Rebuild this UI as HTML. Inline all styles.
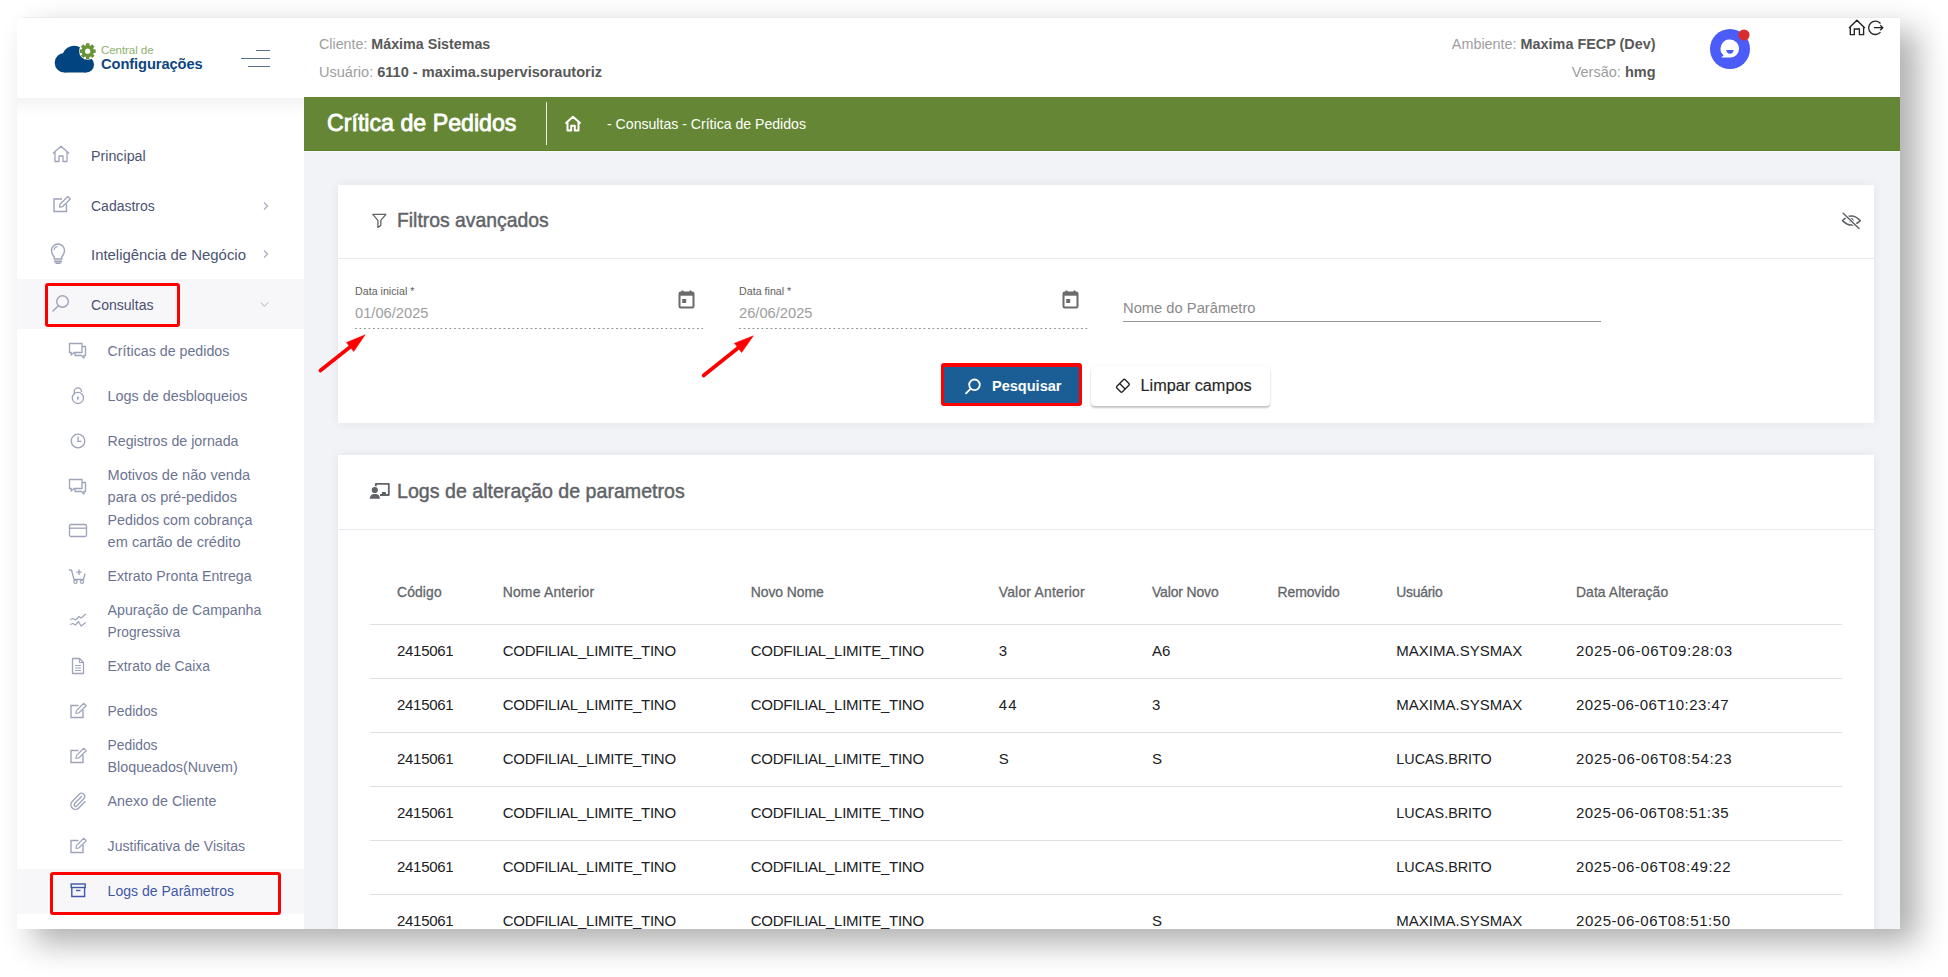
<!DOCTYPE html>
<html><head><meta charset="utf-8">
<style>
*{box-sizing:border-box;margin:0;padding:0}
html,body{width:1948px;height:977px;overflow:hidden;background:#fff;font-family:"Liberation Sans",sans-serif}
#frame{position:absolute;left:17px;top:17px;width:1883px;height:912px;background:#fff;border-top-left-radius:8px;overflow:hidden;box-shadow:17px 14px 32px rgba(0,0,0,.32)}
#pg{position:absolute;left:-17px;top:-17px;width:1948px;height:977px}
.a{position:absolute}
.t{position:absolute;white-space:nowrap;line-height:1}
b{font-weight:700}
</style></head><body>
<div id="frame"><div id="pg">
<div class="a" style="left:304px;top:151px;width:1596px;height:778px;background:#f2f3f7"></div>
<div class="a" style="left:17px;top:98px;width:287px;height:21px;background:linear-gradient(#f3f3f3,#fafafa 45%,#fff)"></div>
<div class="a" style="left:304px;top:97px;width:1596px;height:54px;background:#658735;border-bottom:1px solid #5b8228"></div>
<div class="a" style="left:304px;top:151px;width:1596px;height:1px;background:#f9f8fc"></div>
<div class="a" style="left:17px;top:279px;width:287px;height:50px;background:#f7f7fa"></div>
<div class="a" style="left:17px;top:869px;width:287px;height:44.5px;background:#f7f7fa"></div>
<div class="a" style="left:17px;top:17px;width:1883px;height:1px;background:#ebebeb"></div>
<svg class="a" style="left:50px;top:40px;" width="60" height="40" viewBox="0 0 60 40">
<g fill="#00457f"><circle cx="24.2" cy="17.8" r="12"/><circle cx="14.5" cy="22.7" r="9.8"/><circle cx="36" cy="24.5" r="8"/><rect x="14.5" y="18" width="21.5" height="14.5"/></g>
<g transform="translate(37.7,11.2)"><circle r="8.6" fill="#fff"/><circle r="6.2" fill="#6a9339"/>
<g fill="#6a9339">
<rect x="-1.7" y="-8" width="3.4" height="3.2"/><rect x="-1.7" y="4.8" width="3.4" height="3.2"/>
<rect x="-8" y="-1.7" width="3.2" height="3.4"/><rect x="4.8" y="-1.7" width="3.2" height="3.4"/>
<rect x="-1.7" y="-8" width="3.4" height="3.2" transform="rotate(45)"/><rect x="-1.7" y="4.8" width="3.4" height="3.2" transform="rotate(45)"/>
<rect x="-8" y="-1.7" width="3.2" height="3.4" transform="rotate(45)"/><rect x="4.8" y="-1.7" width="3.2" height="3.4" transform="rotate(45)"/>
</g><circle r="2.6" fill="#fff"/></g>
</svg>
<div class="t" style="left:101.00px;top:44px;font-size:11.6px;color:#8fb36f;font-weight:400;letter-spacing:-0.1px">Central de</div>
<div class="t" style="left:101.00px;top:57px;font-size:14.7px;color:#0d4583;font-weight:700;letter-spacing:-0.1px">Configurações</div>
<div class="a" style="left:256px;top:49.5px;width:14px;height:1.5px;background:#5b7392"></div>
<div class="a" style="left:241px;top:57.7px;width:29px;height:1.5px;background:#5b7392"></div>
<div class="a" style="left:248px;top:65.8px;width:22px;height:1.5px;background:#5b7392"></div>
<div class="t" style="left:319.00px;top:37px;font-size:14.27px;color:#9e9e9e;font-weight:400;">Cliente: <b style="color:#585858">Máxima Sistemas</b></div>
<div class="t" style="left:319.00px;top:65px;font-size:14.55px;color:#9e9e9e;font-weight:400;">Usuário: <b style="color:#585858">6110 - maxima.supervisorautoriz</b></div>
<div class="t" style="right:292.50px;top:37px;font-size:14.4px;color:#9e9e9e;font-weight:400;">Ambiente: <b style="color:#585858">Maxima FECP (Dev)</b></div>
<div class="t" style="right:292.50px;top:65px;font-size:14.5px;color:#9e9e9e;font-weight:400;">Versão: <b style="color:#585858">hmg</b></div>
<svg class="a" style="left:1706px;top:25px;" width="50" height="50" viewBox="0 0 50 50">
<circle cx="24" cy="24" r="20" fill="#4b5cf8"/>
<path d="M24.1 14.6 A9 9 0 0 1 24.1 32.6 L15.3 32.6 L17.6 30.3 A9 9 0 0 1 24.1 14.6Z" fill="#fff"/>
<path d="M20.2 25.1 H27.7 Q27.2 28.7 23.95 28.7 Q20.7 28.7 20.2 25.1Z" fill="#4b5cf8"/>
<circle cx="38" cy="10" r="5.6" fill="#d92d2d"/>
</svg>
<svg class="a" style="left:1847px;top:19px;" width="40" height="20" viewBox="0 0 40 20">
<path d="M2 9.1 L9.9 1.3 L17.8 9.1 M3.3 7.6 V15.6 H7.3 V10 H12.4 V15.6 H16.6 V7.6" fill="none" stroke="#222" stroke-width="1.35" stroke-linejoin="miter"/>
<path d="M33.5 4.5 A6.7 6.7 0 1 0 33.5 13.1" fill="none" stroke="#222" stroke-width="1.3"/>
<path d="M27 8.7 H35.8 M33.2 6.1 L35.8 8.7 L33.2 11.3" fill="none" stroke="#222" stroke-width="1.3"/>
</svg>
<div class="t" style="left:327.00px;top:112px;font-size:23.19px;color:#fff;font-weight:400;-webkit-text-stroke:0.8px #fff">Crítica de Pedidos</div>
<div class="a" style="left:546px;top:102px;width:1px;height:43px;background:rgba(255,255,255,.85)"></div>
<svg class="a" style="left:563px;top:114px;" width="20" height="20" viewBox="0 0 20 20">
<path d="M2.5 9.5 L10 2.8 L17.5 9.5 M4.5 8 V16.5 H8.2 V11.8 H11.8 V16.5 H15.5 V8" fill="none" stroke="#fff" stroke-width="2" stroke-linejoin="round"/>
</svg>
<div class="t" style="left:607.00px;top:117px;font-size:14.1px;color:#fff;font-weight:400;">- Consultas - Crítica de Pedidos</div>
<svg class="a" style="left:51px;top:144px;" width="20" height="20" viewBox="0 0 20 20"><path d="M1.8 9.5 L10 2.3 L18.2 9.5 M4 7.8 V17.5 H8 V12 H12 V17.5 H16 V7.8" fill="none" stroke="#9ea3b9" stroke-width="1.3" stroke-linejoin="round"/></svg>
<div class="t" style="left:91.00px;top:149px;font-size:14.26px;color:#4b5372;font-weight:400;">Principal</div>
<svg class="a" style="left:51px;top:194px;" width="20" height="20" viewBox="0 0 20 20"><path d="M11 5 H3 V17.5 H15.5 V10" fill="none" stroke="#9ea3b9" stroke-width="1.4"/><path d="M8.5 13.2 L9 10.2 L16.8 2.5 L19.3 5 L11.5 12.7 Z" fill="none" stroke="#9ea3b9" stroke-width="1.3" stroke-linejoin="round"/></svg>
<div class="t" style="left:91.00px;top:199px;font-size:14.0px;color:#4b5372;font-weight:400;">Cadastros</div>
<svg class="a" style="left:49px;top:242px;" width="20" height="24" viewBox="0 0 20 24"><path d="M5.3 15 C3.5 13 2.5 11 2.5 8.5 A6.5 6.5 0 0 1 15.5 8.5 C15.5 11 14.5 13 12.7 15 V17 H5.3 Z" fill="none" stroke="#9ea3b9" stroke-width="1.4"/><path d="M5 8 A4 4 0 0 1 8.5 4.5" fill="none" stroke="#9ea3b9" stroke-width="1.1"/><rect x="5" y="18.5" width="8" height="2" fill="#9ea3b9"/><rect x="6.5" y="20.5" width="5" height="1.5" fill="#9ea3b9"/></svg>
<div class="t" style="left:91.00px;top:248px;font-size:14.91px;color:#4b5372;font-weight:400;">Inteligência de Negócio</div>
<svg class="a" style="left:51px;top:293px;" width="20" height="20" viewBox="0 0 20 20"><circle cx="11.5" cy="8.5" r="5.8" fill="none" stroke="#9ea3b9" stroke-width="1.4"/><path d="M7.3 12.7 L2 18" fill="none" stroke="#9ea3b9" stroke-width="1.4" stroke-linecap="round"/></svg>
<div class="t" style="left:91.00px;top:298px;font-size:14.06px;color:#4a5070;font-weight:400;">Consultas</div>
<svg class="a" style="left:261px;top:200.5px;" width="10" height="10" viewBox="0 0 10 10"><path d="M3 1.5 L6.5 5 L3 8.5" fill="none" stroke="#a3a8bd" stroke-width="1.1"/></svg>
<svg class="a" style="left:261px;top:249px;" width="10" height="10" viewBox="0 0 10 10"><path d="M3 1.5 L6.5 5 L3 8.5" fill="none" stroke="#a3a8bd" stroke-width="1.1"/></svg>
<svg class="a" style="left:259px;top:299px;" width="12" height="10" viewBox="0 0 12 10"><path d="M2 3.6 L5.5 7.4 L9 3.6" fill="none" stroke="#a9adc2" stroke-width="1"/></svg>
<svg class="a" style="left:68px;top:342px;" width="20" height="18" viewBox="0 0 20 18"><path d="M1.5 1.5 H14 V10.5 H6 L3.2 13 V10.5 H1.5 Z" fill="none" stroke="#9ea3b9" stroke-width="1.3" stroke-linejoin="round"/><path d="M14 4.5 H17.5 V13.5 H16 V16 L13.3 13.5 H7 V11" fill="none" stroke="#9ea3b9" stroke-width="1.3" stroke-linejoin="round"/></svg>
<div class="t" style="left:107.60px;top:344px;font-size:14.23px;color:#6c7492;font-weight:400;">Críticas de pedidos</div>
<svg class="a" style="left:68px;top:386px;" width="20" height="20" viewBox="0 0 20 20"><path d="M6.3 8.2 V5.4 A3.6 3.6 0 0 1 13.5 5.4 V6" fill="none" stroke="#9ea3b9" stroke-width="1.3"/><circle cx="9.9" cy="11.9" r="5.6" fill="none" stroke="#9ea3b9" stroke-width="1.3"/><circle cx="9.9" cy="11.6" r="1.1" fill="#9ea3b9"/><rect x="9.35" y="11.6" width="1.1" height="2.4" fill="#9ea3b9"/></svg>
<div class="t" style="left:107.60px;top:389px;font-size:14.37px;color:#6c7492;font-weight:400;">Logs de desbloqueios</div>
<svg class="a" style="left:68px;top:432px;" width="20" height="20" viewBox="0 0 20 20"><circle cx="10" cy="9" r="6.8" fill="none" stroke="#9ea3b9" stroke-width="1.3"/><path d="M10 4.5 V9.3 H13.5" fill="none" stroke="#9ea3b9" stroke-width="1.3"/></svg>
<div class="t" style="left:107.60px;top:434px;font-size:14.2px;color:#6c7492;font-weight:400;">Registros de jornada</div>
<svg class="a" style="left:68px;top:478px;" width="20" height="18" viewBox="0 0 20 18"><path d="M1.5 1.5 H14 V10.5 H6 L3.2 13 V10.5 H1.5 Z" fill="none" stroke="#9ea3b9" stroke-width="1.3" stroke-linejoin="round"/><path d="M14 4.5 H17.5 V13.5 H16 V16 L13.3 13.5 H7 V11" fill="none" stroke="#9ea3b9" stroke-width="1.3" stroke-linejoin="round"/></svg>
<div class="t" style="left:107.60px;top:468px;font-size:14.57px;color:#6c7492;font-weight:400;">Motivos de não venda</div>
<div class="t" style="left:107.60px;top:490px;font-size:14.56px;color:#6c7492;font-weight:400;">para os pré-pedidos</div>
<svg class="a" style="left:68px;top:522px;" width="20" height="16" viewBox="0 0 20 16"><rect x="1.5" y="2.5" width="17" height="12" rx="1.5" fill="none" stroke="#9ea3b9" stroke-width="1.3"/><path d="M1.5 6.2 H18.5" stroke="#9ea3b9" stroke-width="1.3"/></svg>
<div class="t" style="left:107.60px;top:513px;font-size:14.24px;color:#6c7492;font-weight:400;">Pedidos com cobrança</div>
<div class="t" style="left:107.60px;top:535px;font-size:14.59px;color:#6c7492;font-weight:400;">em cartão de crédito</div>
<svg class="a" style="left:68px;top:567px;" width="20" height="18" viewBox="0 0 20 18"><path d="M1 3 H3.5 L6 12.5 H15.5 L17 6.5" fill="none" stroke="#9ea3b9" stroke-width="1.3" stroke-linejoin="round"/><path d="M11 2.5 V8 M8.3 5.2 H13.7" stroke="#9ea3b9" stroke-width="1.3"/><circle cx="7.5" cy="14.8" r="1.6" fill="none" stroke="#9ea3b9" stroke-width="1.2"/><circle cx="14" cy="14.8" r="1.6" fill="none" stroke="#9ea3b9" stroke-width="1.2"/></svg>
<div class="t" style="left:107.60px;top:569px;font-size:14.16px;color:#6c7492;font-weight:400;">Extrato Pronta Entrega</div>
<svg class="a" style="left:68px;top:611px;" width="20" height="20" viewBox="0 0 20 20"><path d="M2 8.5 L5 7.5 L7.5 9 L11 5.5 L13 7 L17.8 3" fill="none" stroke="#9ea3b9" stroke-width="1.2" stroke-linejoin="round"/><path d="M2 13.5 L5 12.5 L7.5 14 L10.5 10.5 L13 15 L17.8 11.5" fill="none" stroke="#9ea3b9" stroke-width="1.2" stroke-linejoin="round"/></svg>
<div class="t" style="left:107.60px;top:603px;font-size:14.19px;color:#6c7492;font-weight:400;">Apuração de Campanha</div>
<div class="t" style="left:107.60px;top:626px;font-size:13.73px;color:#6c7492;font-weight:400;">Progressiva</div>
<svg class="a" style="left:70px;top:656px;" width="16" height="20" viewBox="0 0 16 20"><path d="M2.5 2.5 H9.5 L13.5 6.5 V17.5 H2.5 Z" fill="none" stroke="#9ea3b9" stroke-width="1.3" stroke-linejoin="round"/><path d="M9.5 2.5 V6.5 H13.5" fill="none" stroke="#9ea3b9" stroke-width="1.1"/><path d="M5 9.5 H11 M5 12 H11 M5 14.5 H11" stroke="#9ea3b9" stroke-width="1"/></svg>
<div class="t" style="left:107.60px;top:660px;font-size:13.85px;color:#6c7492;font-weight:400;">Extrato de Caixa</div>
<svg class="a" style="left:68px;top:701px;" width="20" height="20" viewBox="0 0 20 20"><path d="M10.5 4.5 H3 V16.5 H15 V9" fill="none" stroke="#9ea3b9" stroke-width="1.4"/><path d="M8 12.5 L8.4 9.6 L15.8 2.3 L18.2 4.7 L10.8 12 Z" fill="none" stroke="#9ea3b9" stroke-width="1.2" stroke-linejoin="round"/></svg>
<div class="t" style="left:107.60px;top:705px;font-size:13.81px;color:#6c7492;font-weight:400;">Pedidos</div>
<svg class="a" style="left:68px;top:746px;" width="20" height="20" viewBox="0 0 20 20"><path d="M10.5 4.5 H3 V16.5 H15 V9" fill="none" stroke="#9ea3b9" stroke-width="1.4"/><path d="M8 12.5 L8.4 9.6 L15.8 2.3 L18.2 4.7 L10.8 12 Z" fill="none" stroke="#9ea3b9" stroke-width="1.2" stroke-linejoin="round"/></svg>
<div class="t" style="left:107.60px;top:739px;font-size:13.81px;color:#6c7492;font-weight:400;">Pedidos</div>
<div class="t" style="left:107.60px;top:760px;font-size:14.28px;color:#6c7492;font-weight:400;">Bloqueados(Nuvem)</div>
<svg class="a" style="left:68px;top:791px;" width="20" height="20" viewBox="0 0 20 20"><path d="M13.5 5.5 L6.5 12.8 A1.6 1.6 0 0 0 8.8 15 L16 7.5 A3.2 3.2 0 0 0 11.5 3 L4.2 10.5 A4.6 4.6 0 0 0 10.8 17 L17 10.5" fill="none" stroke="#9ea3b9" stroke-width="1.3" stroke-linecap="round"/></svg>
<div class="t" style="left:107.60px;top:794px;font-size:14.29px;color:#6c7492;font-weight:400;">Anexo de Cliente</div>
<svg class="a" style="left:68px;top:836px;" width="20" height="20" viewBox="0 0 20 20"><path d="M10.5 4.5 H3 V16.5 H15 V9" fill="none" stroke="#9ea3b9" stroke-width="1.4"/><path d="M8 12.5 L8.4 9.6 L15.8 2.3 L18.2 4.7 L10.8 12 Z" fill="none" stroke="#9ea3b9" stroke-width="1.2" stroke-linejoin="round"/></svg>
<div class="t" style="left:107.60px;top:839px;font-size:14.08px;color:#6c7492;font-weight:400;">Justificativa de Visitas</div>
<svg class="a" style="left:68px;top:881px;" width="20" height="18" viewBox="0 0 20 18"><rect x="3.2" y="3" width="14" height="3.5" fill="none" stroke="#3f57a6" stroke-width="1.4"/><path d="M3.8 6.5 V15.5 H16.6 V6.5" fill="none" stroke="#3f57a6" stroke-width="1.4"/><path d="M8 9.5 H12.5" stroke="#3f57a6" stroke-width="1.4"/></svg>
<div class="t" style="left:107.60px;top:884px;font-size:14.05px;color:#3f57a6;font-weight:400;">Logs de Parâmetros</div>
<div class="a" style="left:44.7px;top:282.6px;width:135.5px;height:44.39999999999998px;border:3.6px solid #f00;border-radius:3px"></div>
<div class="a" style="left:49.8px;top:872px;width:230.89999999999998px;height:43.39999999999998px;border:3.6px solid #f00;border-radius:3px"></div>
<div class="a" style="left:338px;top:185px;width:1536px;height:238px;background:#fff;box-shadow:0 0 10px rgba(30,30,70,.07)"></div>
<div class="a" style="left:338px;top:258px;width:1536px;height:1px;background:#e9eaee"></div>
<svg class="a" style="left:371px;top:212px;" width="18" height="18" viewBox="0 0 18 18"><path d="M1.8 2.3 H14.9 L9.8 8.3 V13.5 L6.9 15.4 V8.3 Z" fill="none" stroke="#5f6368" stroke-width="1.3" stroke-linejoin="round"/></svg>
<div class="t" style="left:397.00px;top:211px;font-size:19.35px;color:#5f6368;font-weight:400;-webkit-text-stroke:0.45px #5f6368">Filtros avançados</div>
<svg class="a" style="left:1840px;top:210px;" width="22" height="22" viewBox="0 0 22 22"><path d="M2.5 10.6 Q11.4 1.6 20.3 10.6 Q11.4 19.6 2.5 10.6 Z" fill="none" stroke="#5f6368" stroke-width="1.5" stroke-linejoin="round"/><circle cx="11.2" cy="10.4" r="2.4" fill="#5f6368"/><path d="M3.2 3.3 L19 18.5" stroke="#fff" stroke-width="3.2"/><path d="M3.2 3.3 L19 18.5" stroke="#5f6368" stroke-width="1.5" stroke-linecap="round"/></svg>
<div class="t" style="left:355.00px;top:286px;font-size:10.7px;color:#616161;font-weight:400;">Data inicial *</div>
<div class="t" style="left:355.00px;top:306px;font-size:14.7px;color:#9e9e9e;font-weight:400;">01/06/2025</div>
<div class="a" style="left:355px;top:327.5px;width:348.29999999999995px;height:1.0px;background-image:linear-gradient(to right,#8f8f8f 0,#8f8f8f 45%,transparent 45%);background-size:4.5px 1px"></div>
<svg class="a" style="left:678px;top:289px;" width="18" height="20" viewBox="0 0 18 20"><path d="M4.5 1.5 V4.5 M12.5 1.5 V4.5" stroke="#6b6b6b" stroke-width="2"/><rect x="1.5" y="3.5" width="14" height="15" rx="1.3" fill="none" stroke="#6b6b6b" stroke-width="2"/><rect x="1.5" y="3.5" width="14" height="3.2" fill="#6b6b6b"/><rect x="4.2" y="10" width="4" height="4" fill="#6b6b6b"/></svg>
<div class="t" style="left:739.00px;top:286px;font-size:10.7px;color:#616161;font-weight:400;">Data final *</div>
<div class="t" style="left:739.00px;top:306px;font-size:14.7px;color:#9e9e9e;font-weight:400;">26/06/2025</div>
<div class="a" style="left:739px;top:327.5px;width:348.5px;height:1.0px;background-image:linear-gradient(to right,#8f8f8f 0,#8f8f8f 45%,transparent 45%);background-size:4.5px 1px"></div>
<svg class="a" style="left:1062px;top:289px;" width="18" height="20" viewBox="0 0 18 20"><path d="M4.5 1.5 V4.5 M12.5 1.5 V4.5" stroke="#6b6b6b" stroke-width="2"/><rect x="1.5" y="3.5" width="14" height="15" rx="1.3" fill="none" stroke="#6b6b6b" stroke-width="2"/><rect x="1.5" y="3.5" width="14" height="3.2" fill="#6b6b6b"/><rect x="4.2" y="10" width="4" height="4" fill="#6b6b6b"/></svg>
<div class="t" style="left:1123.00px;top:301px;font-size:14.72px;color:#8a8a8a;font-weight:400;">Nome do Parâmetro</div>
<div class="a" style="left:1123px;top:321px;width:478px;height:1px;background:#949494"></div>
<div class="a" style="left:940.8px;top:363.4px;width:141.60000000000014px;height:42.80000000000001px;background:#f00;border-radius:3px"></div>
<div class="a" style="left:944.4px;top:367.2px;width:134.39999999999998px;height:35.400000000000034px;background:#1b5e96;border-radius:2px"></div>
<svg class="a" style="left:963px;top:377px;" width="20" height="18" viewBox="0 0 20 18"><circle cx="11.5" cy="7.8" r="5.3" fill="none" stroke="#fff" stroke-width="1.8"/><path d="M7.7 11.6 L3 16.3" stroke="#fff" stroke-width="1.8" stroke-linecap="round"/></svg>
<div class="t" style="left:992.00px;top:379px;font-size:14.54px;color:#fff;font-weight:700;">Pesquisar</div>
<div class="a" style="left:1091px;top:366px;width:179px;height:40px;background:#fff;border-radius:4px;box-shadow:0 2px 2px rgba(0,0,0,.22),0 0 2px rgba(0,0,0,.08)"></div>
<svg class="a" style="left:1113px;top:376px;" width="20" height="20" viewBox="0 0 20 20"><g transform="translate(9.9,9.75) rotate(-45)"><rect x="-5.9" y="-3.9" width="11.8" height="7.8" rx="1.3" fill="none" stroke="#222" stroke-width="1.35"/><path d="M-0.8 -3.9 V3.9" stroke="#222" stroke-width="1.35"/></g></svg>
<div class="t" style="left:1140.60px;top:377px;font-size:16.24px;color:#262626;font-weight:400;-webkit-text-stroke:0.15px #262626">Limpar campos</div>
<svg class="a" style="left:0;top:0" width="1948" height="977"><line x1="320.4" y1="370.5" x2="350.04999999999995" y2="347.05" stroke="#f00" stroke-width="3.7" stroke-linecap="round"/><polygon points="365.2,334.7 346.4,342.6 353.7,351.5" fill="#f00" stroke="#f00" stroke-width="0.5" stroke-linejoin="round"/></svg>
<svg class="a" style="left:0;top:0" width="1948" height="977"><line x1="703.6" y1="375.5" x2="738.0" y2="347.95000000000005" stroke="#f00" stroke-width="3.7" stroke-linecap="round"/><polygon points="753.4,335.8 734.4,343.3 741.6,352.6" fill="#f00" stroke="#f00" stroke-width="0.5" stroke-linejoin="round"/></svg>
<div class="a" style="left:338px;top:455px;width:1536px;height:545px;background:#fff;box-shadow:0 0 10px rgba(30,30,70,.07)"></div>
<div class="a" style="left:338px;top:529px;width:1536px;height:1px;background:#e9eaee"></div>
<svg class="a" style="left:369px;top:481px;" width="22" height="20" viewBox="0 0 22 20"><path d="M6.8 5.2 V2.8 H19.8 V14 H11" fill="none" stroke="#5f6368" stroke-width="1.8" stroke-linejoin="round"/><rect x="12.9" y="11" width="4" height="2.6" fill="#5f6368"/><circle cx="5.8" cy="9" r="3.1" fill="#5f6368"/><path d="M0.8 17.8 C0.8 14.4 3 13 5.85 13 C8.7 13 10.9 14.4 10.9 17.8 Z" fill="#5f6368"/></svg>
<div class="t" style="left:397.00px;top:482px;font-size:19.63px;color:#5f6368;font-weight:400;-webkit-text-stroke:0.45px #5f6368">Logs de alteração de parametros</div>
<div class="t" style="left:397.00px;top:586px;font-size:13.9px;color:#63666a;font-weight:400;-webkit-text-stroke:0.3px #63666a;letter-spacing:0.131px">Código</div>
<div class="t" style="left:502.70px;top:586px;font-size:13.9px;color:#63666a;font-weight:400;-webkit-text-stroke:0.3px #63666a;letter-spacing:0.213px">Nome Anterior</div>
<div class="t" style="left:750.70px;top:586px;font-size:13.9px;color:#63666a;font-weight:400;-webkit-text-stroke:0.3px #63666a;letter-spacing:-0.023px">Novo Nome</div>
<div class="t" style="left:998.70px;top:586px;font-size:13.9px;color:#63666a;font-weight:400;-webkit-text-stroke:0.3px #63666a;letter-spacing:0.217px">Valor Anterior</div>
<div class="t" style="left:1151.90px;top:586px;font-size:13.9px;color:#63666a;font-weight:400;-webkit-text-stroke:0.3px #63666a;letter-spacing:-0.103px">Valor Novo</div>
<div class="t" style="left:1277.60px;top:586px;font-size:13.9px;color:#63666a;font-weight:400;-webkit-text-stroke:0.3px #63666a;letter-spacing:-0.068px">Removido</div>
<div class="t" style="left:1396.30px;top:586px;font-size:13.9px;color:#63666a;font-weight:400;-webkit-text-stroke:0.3px #63666a;letter-spacing:-0.249px">Usuário</div>
<div class="t" style="left:1576.00px;top:586px;font-size:13.9px;color:#63666a;font-weight:400;-webkit-text-stroke:0.3px #63666a;letter-spacing:0.079px">Data Alteração</div>
<div class="a" style="left:370px;top:624px;width:1472px;height:1px;background:#e0e0e0"></div>
<div class="t" style="left:397.00px;top:643px;font-size:15px;color:#202124;font-weight:400;letter-spacing:-0.3px">2415061</div>
<div class="t" style="left:502.70px;top:643px;font-size:15px;color:#202124;font-weight:400;letter-spacing:-0.25px">CODFILIAL_LIMITE_TINO</div>
<div class="t" style="left:750.70px;top:643px;font-size:15px;color:#202124;font-weight:400;letter-spacing:-0.25px">CODFILIAL_LIMITE_TINO</div>
<div class="t" style="left:998.70px;top:643px;font-size:15px;color:#202124;font-weight:400;">3</div>
<div class="t" style="left:1151.90px;top:643px;font-size:15px;color:#202124;font-weight:400;">A6</div>
<div class="t" style="left:1396.30px;top:643px;font-size:15px;color:#202124;font-weight:400;">MAXIMA.SYSMAX</div>
<div class="t" style="left:1576.00px;top:643px;font-size:15px;color:#202124;font-weight:400;letter-spacing:0.652px">2025-06-06T09:28:03</div>
<div class="a" style="left:370px;top:678px;width:1472px;height:1px;background:#e0e0e0"></div>
<div class="t" style="left:397.00px;top:697px;font-size:15px;color:#202124;font-weight:400;letter-spacing:-0.3px">2415061</div>
<div class="t" style="left:502.70px;top:697px;font-size:15px;color:#202124;font-weight:400;letter-spacing:-0.25px">CODFILIAL_LIMITE_TINO</div>
<div class="t" style="left:750.70px;top:697px;font-size:15px;color:#202124;font-weight:400;letter-spacing:-0.25px">CODFILIAL_LIMITE_TINO</div>
<div class="t" style="left:998.70px;top:697px;font-size:15px;color:#202124;font-weight:400;letter-spacing:1.2px">44</div>
<div class="t" style="left:1151.90px;top:697px;font-size:15px;color:#202124;font-weight:400;">3</div>
<div class="t" style="left:1396.30px;top:697px;font-size:15px;color:#202124;font-weight:400;">MAXIMA.SYSMAX</div>
<div class="t" style="left:1576.00px;top:697px;font-size:15px;color:#202124;font-weight:400;letter-spacing:0.458px">2025-06-06T10:23:47</div>
<div class="a" style="left:370px;top:732px;width:1472px;height:1px;background:#e0e0e0"></div>
<div class="t" style="left:397.00px;top:751px;font-size:15px;color:#202124;font-weight:400;letter-spacing:-0.3px">2415061</div>
<div class="t" style="left:502.70px;top:751px;font-size:15px;color:#202124;font-weight:400;letter-spacing:-0.25px">CODFILIAL_LIMITE_TINO</div>
<div class="t" style="left:750.70px;top:751px;font-size:15px;color:#202124;font-weight:400;letter-spacing:-0.25px">CODFILIAL_LIMITE_TINO</div>
<div class="t" style="left:998.70px;top:751px;font-size:15px;color:#202124;font-weight:400;">S</div>
<div class="t" style="left:1151.90px;top:751px;font-size:15px;color:#202124;font-weight:400;">S</div>
<div class="t" style="left:1396.30px;top:752px;font-size:14.36px;color:#202124;font-weight:400;">LUCAS.BRITO</div>
<div class="t" style="left:1576.00px;top:751px;font-size:15px;color:#202124;font-weight:400;letter-spacing:0.624px">2025-06-06T08:54:23</div>
<div class="a" style="left:370px;top:786px;width:1472px;height:1px;background:#e0e0e0"></div>
<div class="t" style="left:397.00px;top:805px;font-size:15px;color:#202124;font-weight:400;letter-spacing:-0.3px">2415061</div>
<div class="t" style="left:502.70px;top:805px;font-size:15px;color:#202124;font-weight:400;letter-spacing:-0.25px">CODFILIAL_LIMITE_TINO</div>
<div class="t" style="left:750.70px;top:805px;font-size:15px;color:#202124;font-weight:400;letter-spacing:-0.25px">CODFILIAL_LIMITE_TINO</div>
<div class="t" style="left:1396.30px;top:806px;font-size:14.36px;color:#202124;font-weight:400;">LUCAS.BRITO</div>
<div class="t" style="left:1576.00px;top:805px;font-size:15px;color:#202124;font-weight:400;letter-spacing:0.458px">2025-06-06T08:51:35</div>
<div class="a" style="left:370px;top:840px;width:1472px;height:1px;background:#e0e0e0"></div>
<div class="t" style="left:397.00px;top:859px;font-size:15px;color:#202124;font-weight:400;letter-spacing:-0.3px">2415061</div>
<div class="t" style="left:502.70px;top:859px;font-size:15px;color:#202124;font-weight:400;letter-spacing:-0.25px">CODFILIAL_LIMITE_TINO</div>
<div class="t" style="left:750.70px;top:859px;font-size:15px;color:#202124;font-weight:400;letter-spacing:-0.25px">CODFILIAL_LIMITE_TINO</div>
<div class="t" style="left:1396.30px;top:860px;font-size:14.36px;color:#202124;font-weight:400;">LUCAS.BRITO</div>
<div class="t" style="left:1576.00px;top:859px;font-size:15px;color:#202124;font-weight:400;letter-spacing:0.569px">2025-06-06T08:49:22</div>
<div class="a" style="left:370px;top:894px;width:1472px;height:1px;background:#e0e0e0"></div>
<div class="t" style="left:397.00px;top:913px;font-size:15px;color:#202124;font-weight:400;letter-spacing:-0.3px">2415061</div>
<div class="t" style="left:502.70px;top:913px;font-size:15px;color:#202124;font-weight:400;letter-spacing:-0.25px">CODFILIAL_LIMITE_TINO</div>
<div class="t" style="left:750.70px;top:913px;font-size:15px;color:#202124;font-weight:400;letter-spacing:-0.25px">CODFILIAL_LIMITE_TINO</div>
<div class="t" style="left:1151.90px;top:913px;font-size:15px;color:#202124;font-weight:400;">S</div>
<div class="t" style="left:1396.30px;top:913px;font-size:15px;color:#202124;font-weight:400;">MAXIMA.SYSMAX</div>
<div class="t" style="left:1576.00px;top:913px;font-size:15px;color:#202124;font-weight:400;letter-spacing:0.541px">2025-06-06T08:51:50</div>
</div></div>
</body></html>
